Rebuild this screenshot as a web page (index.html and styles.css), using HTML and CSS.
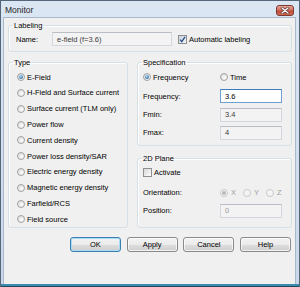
FILE: index.html
```html
<!DOCTYPE html>
<html lang="en">
  <head>
    <meta charset="utf-8" />
    <title>Monitor</title>
    <link rel="stylesheet" href="styles.css">
  </head>
  <body>
    <div class="window">
      <div class="titlebar">
        <span class="title">Monitor</span>
        <span class="close">
          <svg width="10" height="7" viewBox="0 0 10 7">
            <path d="M2 1 L8 6 M8 1 L2 6" stroke="#4a2a26" stroke-width="2.6" stroke-linecap="round" />
            <path d="M2 1 L8 6 M8 1 L2 6" stroke="#ffffff" stroke-width="1.4" stroke-linecap="round" />
          </svg>
        </span>
      </div>

      <div class="client">
        <fieldset class="group labeling">
          <legend>Labeling</legend>
          <div class="name-row">
            <span class="name-label">Name:</span>
            <span class="field readonly name-field">e-field (f=3.6)</span>
            <span class="check checked">
              <svg width="7" height="7" viewBox="0 0 7 7">
                <path d="M1 3.6 L2.8 5.6 L6 0.8" fill="none" stroke="#2c4f84" stroke-width="1.3" />
              </svg>
            </span>
            <span class="check-text">Automatic labeling</span>
          </div>
        </fieldset>

        <div class="columns">
          <fieldset class="group type">
            <legend>Type</legend>
            <div class="option"><span class="radio on"></span>E-Field</div>
            <div class="option"><span class="radio"></span>H-Field and Surface current</div>
            <div class="option"><span class="radio"></span>Surface current (TLM only)</div>
            <div class="option"><span class="radio"></span>Power flow</div>
            <div class="option"><span class="radio"></span>Current density</div>
            <div class="option"><span class="radio"></span>Power loss density/SAR</div>
            <div class="option"><span class="radio"></span>Electric energy density</div>
            <div class="option"><span class="radio"></span>Magnetic energy density</div>
            <div class="option"><span class="radio"></span>Farfield/RCS</div>
            <div class="option"><span class="radio"></span>Field source</div>
          </fieldset>

          <div class="right">
            <fieldset class="group spec">
              <legend>Specification</legend>
              <div class="option-pair">
                <div class="option"><span class="radio on"></span>Frequency</div>
                <div class="option"><span class="radio"></span>Time</div>
              </div>
              <div class="form-row">
                <span class="form-label">Frequency:</span>
                <span class="field active">3.6</span>
              </div>
              <div class="form-row">
                <span class="form-label">Fmin:</span>
                <span class="field readonly">3.4</span>
              </div>
              <div class="form-row">
                <span class="form-label">Fmax:</span>
                <span class="field readonly">4</span>
              </div>
            </fieldset>

            <fieldset class="group plane">
              <legend>2D Plane</legend>
              <div class="check-row">
                <span class="check"></span>
                <span class="check-text">Activate</span>
              </div>
              <div class="form-row orient-row">
                <span class="form-label">Orientation:</span>
                <div class="axes">
                  <div class="option disabled"><span class="radio on"></span>X</div>
                  <div class="option disabled"><span class="radio"></span>Y</div>
                  <div class="option disabled"><span class="radio"></span>Z</div>
                </div>
              </div>
              <div class="form-row">
                <span class="form-label">Position:</span>
                <span class="field readonly dim">0</span>
              </div>
            </fieldset>
          </div>
        </div>

        <div class="buttons">
          <span class="button default">OK</span>
          <span class="button">Apply</span>
          <span class="button">Cancel</span>
          <span class="button">Help</span>
        </div>
      </div>
      <div class="bottom-line"></div>
    </div>
  </body>
</html>
```

FILE: styles.css
```css
* {
  padding: 0;
  margin: 0;
  box-sizing: border-box;
}
body {
  font-family: "Liberation Sans", Arial, sans-serif;
  font-size: 7.5px;
  color: #000;
  background: #3a8db0;
}
.window {
  width: 300px;
  height: 287px;
  display: flex;
  flex-direction: column;
  background: linear-gradient(to bottom, #dbe6f3, #c9d8ea);
  border: 1px solid #56667a;
  border-bottom: none;
}
.titlebar {
  height: 16px;
  display: flex;
  align-items: center;
  justify-content: space-between;
  padding: 0 5px 0 4px;
}
.title {
  font-size: 8.5px;
  color: #1e1e1e;
  margin-top: 1px;
}
.close {
  width: 18px;
  height: 11px;
  margin-top: 3px;
  border: 1px solid #7a3a32;
  border-radius: 3px;
  background: linear-gradient(to bottom, #e9a899, #d2705f 45%, #c24a3a 55%, #d06a52);
  display: flex;
  align-items: center;
  justify-content: center;
}
.client {
  flex: 1;
  margin: 0 3px 0 2px;
  background: #f0f0f0;
  border: 1px solid #a9b8ca;
  border-bottom: none;
  padding: 3px 3px 0 4px;
  display: flex;
  flex-direction: column;
}
.bottom-line {
  height: 3px;
  background: #3a8db0;
  border-bottom: 1px solid #23485a;
}

/* group boxes */
.group {
  border: 1px solid #d5dfe5;
  border-radius: 3px;
  box-shadow: inset 1px 1px 0 #fff;
}
.group legend {
  line-height: 9px;
  padding: 0 1px;
}
.labeling {
  padding: 2px 0 5px 7px;
}
.labeling legend {
  margin-left: -3px;
}
.name-row {
  display: flex;
  align-items: center;
  height: 14px;
}
.name-label {
  width: 36px;
}
.name-field {
  width: 120px;
  margin-right: 6px;
}
.field {
  height: 14px;
  display: flex;
  align-items: center;
  padding-left: 4px;
  border: 1px solid #d3d7de;
  border-top-color: #b9bdc5;
}
.field.readonly {
  background: #f3f3f3;
  color: #3c3c3c;
}
.field.active {
  background: #fff;
  border-color: #6e9fd2;
  border-top-color: #3d7bbf;
}
.field.dim {
  color: #9a9a9a;
}

.check {
  width: 9px;
  height: 9px;
  border: 1px solid #8e8f8f;
  background: linear-gradient(135deg, #d8d8d8, #fbfbfb);
  display: flex;
  align-items: center;
  justify-content: center;
  margin-right: 2px;
}
.check.checked {
  background: linear-gradient(135deg, #c9d3df, #f4f6f9);
}

.columns {
  margin-top: 6px;
  display: grid;
  grid-template-columns: 120px 155px;
  column-gap: 9px;
}
.type {
  padding: 2.3px 0 0 8px;
}
.type legend {
  margin-left: -4px;
}
.option {
  height: 15.8px;
  display: flex;
  align-items: center;
  white-space: nowrap;
}
.radio {
  width: 8px;
  height: 8px;
  border-radius: 50%;
  border: 1px solid #a2a2a2;
  background: radial-gradient(circle at 65% 65%, #ffffff, #dcdcdc 80%);
  margin-right: 2px;
  display: flex;
  align-items: center;
  justify-content: center;
  flex: none;
}
.radio.on::after {
  content: "";
  width: 4px;
  height: 4px;
  border-radius: 50%;
  background: radial-gradient(circle at 40% 35%, #b5e2fb, #2c6fa8 70%, #1a4b7c);
}
.option.disabled {
  color: #9d9d9d;
}
.option.disabled .radio {
  border-color: #c9c9c9;
  background: #f4f4f4;
  margin-right: 3px;
}
.option.disabled .radio.on::after {
  background: #b9b9b9;
}

.right {
  display: flex;
  flex-direction: column;
  gap: 7.5px;
}
.spec {
  padding: 2.3px 0 5.4px 5px;
}
.spec legend,
.plane legend {
  margin-left: -1px;
}
.option-pair {
  display: grid;
  grid-template-columns: 77px auto;
}
.form-row {
  display: flex;
  align-items: center;
  height: 14px;
  margin-top: 4.3px;
}
.form-label {
  width: 77px;
}
.form-row .field {
  width: 62px;
}
.plane {
  flex: 1;
  padding: 2.8px 0 0 5px;
}
.check-row {
  display: flex;
  align-items: center;
  height: 14px;
}
.orient-row {
  margin-top: 6px;
}
.axes {
  display: flex;
  gap: 7px;
}

.buttons {
  margin-top: 9px;
  display: flex;
  justify-content: flex-end;
  gap: 5.7px;
  padding-right: 1px;
}
.button {
  width: 51px;
  height: 15px;
  display: flex;
  align-items: center;
  justify-content: center;
  border: 1px solid #8a8a8a;
  border-radius: 3px;
  background: linear-gradient(to bottom, #f3f3f3, #ebebeb 50%, #dddddd 51%, #cfcfcf);
  box-shadow: inset 0 0 0 1px rgba(255, 255, 255, 0.7);
}
.button.default {
  border-color: #3c7fb1;
  box-shadow: inset 0 0 0 1px #a8dcf4;
}
```
